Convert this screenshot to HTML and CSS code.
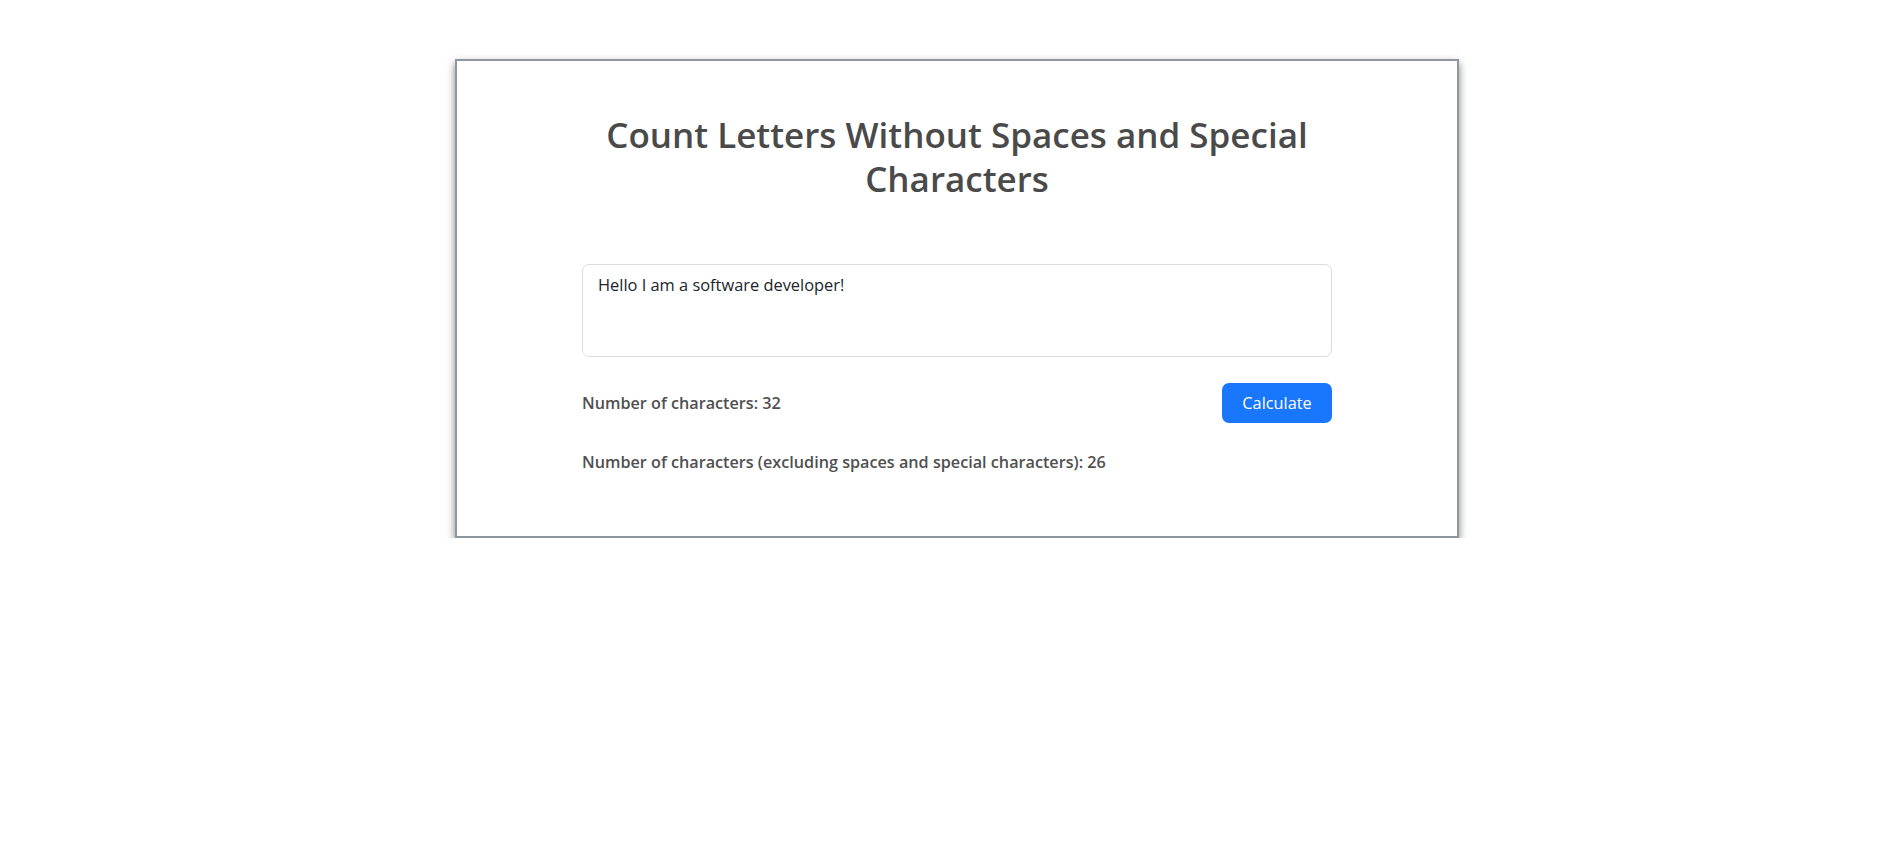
FILE: index.html
```html
<!DOCTYPE html>
<html lang="en">
<head>
<meta charset="utf-8">
<title>Count Letters</title>
<link rel="stylesheet" href="styles.css">
</head>
<body>
<div class="page">
  <main class="card">
    <h1 class="title">Count Letters Without Spaces and Special Characters</h1>
    <textarea class="input">Hello I am a software developer!</textarea>
    <div class="row">
      <span class="label">Number of characters: 32</span>
      <button class="btn" type="button">Calculate</button>
    </div>
    <p class="label result">Number of characters (excluding spaces and special characters): 26</p>
  </main>
</div>
</body>
</html>
```
FILE: styles.css
```css
* { box-sizing: border-box; }
html, body { margin: 0; background: #fff; }
body { font-family: "Open Sans", "Noto Sans", sans-serif; color: #4a4a4a; }
.page { display: flex; justify-content: center; padding: 59px 0 0 13px; }
.card {
  width: 1004px;
  border: 2px solid #8f96a0;
  box-shadow: 0 4px 8px rgba(0, 0, 0, 0.5);
  background: #fff;
  padding: 52px 125px 62px;
  display: flex;
  flex-direction: column;
}
.title {
  margin: 0;
  text-align: center;
  font-size: 35px;
  line-height: 44px;
  font-weight: 600;
  color: #4a4a4a;
}
.input {
  margin-top: 63px;
  height: 93px;
  width: 100%;
  border: 1px solid #dcdcdc;
  border-radius: 7px;
  padding: 8px 15px;
  font-family: inherit;
  font-size: 16.4px;
  line-height: 24px;
  color: #212529;
  resize: none;
  outline: none;
}
.row {
  margin-top: 26px;
  display: flex;
  justify-content: space-between;
  align-items: center;
}
.label {
  font-size: 16.2px;
  line-height: 24px;
  font-weight: 600;
  color: #505050;
}
.result { margin: 27px 0 0; }
.btn {
  height: 40px;
  width: 110px;
  border: none;
  border-radius: 7px;
  background: #1877fd;
  color: #fff;
  font-family: inherit;
  font-size: 16.3px;
  padding: 0;
}
```
